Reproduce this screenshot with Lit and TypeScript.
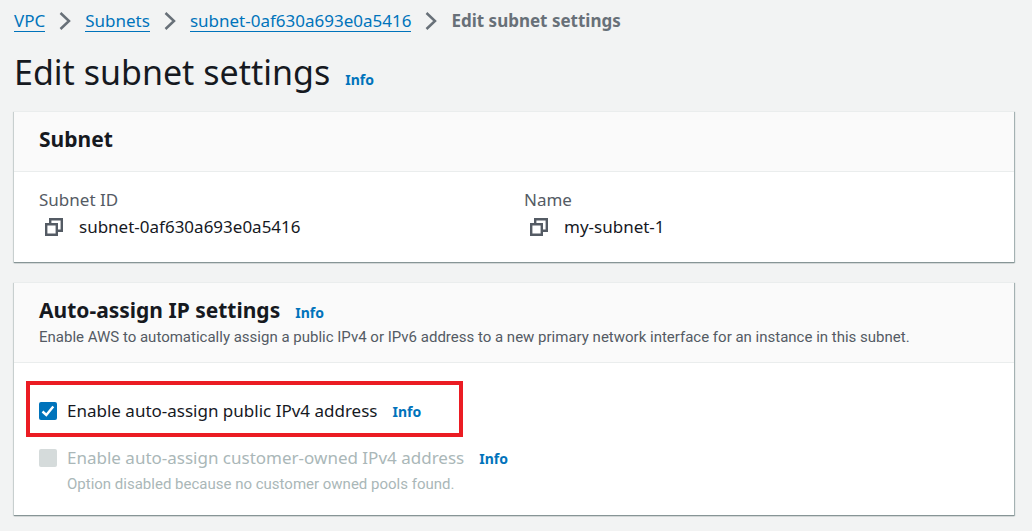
import { LitElement, html, css, svg } from "lit";
import { customElement } from "lit/decorators.js";

const chevron = html`<svg class="chevron" viewBox="0 0 12 20" aria-hidden="true">
  ${svg`<path d="M1.5 2 10 10 1.5 18" fill="none" stroke="currentColor" stroke-width="2.5" />`}
</svg>`;

const copyIcon = html`<svg class="copy-icon" viewBox="0 0 18 18" aria-hidden="true">
  ${svg`<path d="M1.2 6.2h10.6v10.6H1.2zM5.2 6V1.2h11.6v11.6H12" fill="none" stroke="currentColor" stroke-width="2.4" />`}
</svg>`;

@customElement("app-root")
export class AppRoot extends LitElement {
  static styles = css`
    :host {
      display: block;
      box-sizing: border-box;
      min-height: 100vh;
      padding: 8px 18px 0 14px;
      background: #f2f3f3;
      color: #16191f;
      font-family: "Noto Sans", "Open Sans", sans-serif;
      font-size: 17px;
      line-height: 26px;
    }
    .crumbs {
      display: flex;
      align-items: center;
      gap: 14px;
      margin: 0;
      padding: 0;
      list-style: none;
    }
    .crumbs li {
      display: flex;
      align-items: center;
      gap: 14px;
      height: 26px;
    }
    .crumbs a {
      color: #0073bb;
      line-height: 20px;
      text-decoration: none;
      border-bottom: 1px solid #0073bb;
    }
    .current {
      color: #687078;
      font-weight: 700;
    }
    .chevron {
      width: 12px;
      height: 20px;
      color: #687078;
    }
    .heading {
      display: flex;
      align-items: baseline;
      gap: 15px;
    }
    .page-heading {
      margin: 16px 0 17px;
    }
    h1,
    h2,
    p,
    dl,
    dd {
      margin: 0;
    }
    h1 {
      font-size: 34px;
      font-weight: 400;
      line-height: 44px;
    }
    h2 {
      font-size: 21px;
      font-weight: 700;
      line-height: 28px;
    }
    .info {
      color: #0073bb;
      font-size: 14px;
      font-weight: 700;
      line-height: 20px;
      text-decoration: none;
    }
    .panel {
      background: #fff;
      box-shadow: 0 1px 1px #879596, 1px 1px 1px #aab7b8, -1px 1px 1px #d5dbdb;
      border-top: 1px solid #eaeded;
      margin-bottom: 20px;
    }
    .panel:last-child {
      margin-bottom: 0;
    }
    .panel header {
      box-sizing: border-box;
      min-height: 60px;
      padding: 13px 25px 14px;
      background: #fafafa;
      border-bottom: 1px solid #eaeded;
    }
    .small {
      font-family: Roboto, "Noto Sans", sans-serif;
      font-size: 15px;
      line-height: 22px;
    }
    .small {
      margin-top: 2px;
    }
    .muted {
      color: #545b64;
    }
    .details {
      display: grid;
      grid-template-columns: 1fr 1fr;
      gap: 20px;
      padding: 15px 25px 21px;
    }
    .value {
      display: flex;
      align-items: center;
      gap: 16px;
      padding-left: 6px;
      line-height: 28px;
    }
    .copy {
      display: flex;
      padding: 0;
      border: 0;
      background: none;
      color: #545b64;
    }
    .copy-icon {
      width: 18px;
      height: 18px;
    }
    .options {
      display: flex;
      flex-direction: column;
      align-items: flex-start;
      gap: 21px;
      padding: 35px 25px 20px;
    }
    .option {
      display: grid;
      grid-template-columns: 18px auto;
      column-gap: 10px;
      align-items: center;
      position: relative;
    }
    .option .small {
      grid-column: 2;
    }
    .disabled {
      color: #aab7b8;
    }
    .marker {
      position: absolute;
      inset: -17px -42px -13px -13px;
      border: 4px solid #eb1c23;
      pointer-events: none;
    }
    input {
      appearance: none;
      width: 18px;
      height: 18px;
      margin: 0;
      border-radius: 2px;
      background: #d5dbdb;
    }
    .box {
      display: grid;
    }
    .box > * {
      grid-area: 1 / 1;
    }
    input:checked {
      background: #0073bb;
    }
    .tick {
      width: 18px;
      height: 18px;
      pointer-events: none;
      visibility: hidden;
    }
    input:checked + .tick {
      visibility: visible;
    }
  `;

  private info() {
    return html`<a class="info" href="#info">Info</a>`;
  }

  private detail(label: string, value: string) {
    return html`<dl>
      <dt class="muted">${label}</dt>
      <dd class="value">
        <button class="copy" type="button" aria-label="Copy ${label}">${copyIcon}</button>
        <span>${value}</span>
      </dd>
    </dl>`;
  }

  render() {
    return html`
      <nav aria-label="Breadcrumbs">
        <ol class="crumbs">
          <li><a href="#vpc">VPC</a>${chevron}</li>
          <li><a href="#subnets">Subnets</a>${chevron}</li>
          <li><a href="#subnet">subnet-0af630a693e0a5416</a>${chevron}</li>
          <li class="current" aria-current="page">Edit subnet settings</li>
        </ol>
      </nav>
      <main>
        <div class="heading page-heading">
          <h1>Edit subnet settings</h1>
          ${this.info()}
        </div>
        <section class="panel">
          <header><h2>Subnet</h2></header>
          <div class="details">
            ${this.detail("Subnet ID", "subnet-0af630a693e0a5416")}
            ${this.detail("Name", "my-subnet-1")}
          </div>
        </section>
        <section class="panel">
          <header>
            <div class="heading"><h2>Auto-assign IP settings</h2>${this.info()}</div>
            <p class="small muted">
              Enable AWS to automatically assign a public IPv4 or IPv6 address to a new primary network interface for an instance in this subnet.
            </p>
          </header>
          <div class="options">
            <div class="option">
              <span class="box">
                <input id="public-ip" type="checkbox" checked />
                <svg class="tick" viewBox="0 0 18 18" aria-hidden="true">
                  <path d="M3.5 9.5 7.3 13 14.3 4.5" fill="none" stroke="#fff" stroke-width="2.4" />
                </svg>
              </span>
              <div class="heading">
                <label for="public-ip">Enable auto-assign public IPv4 address</label>
                ${this.info()}
              </div>
              <div class="marker"></div>
            </div>
            <div class="option disabled">
              <span class="box"><input id="owned-ip" type="checkbox" disabled aria-describedby="owned-note" /></span>
              <div class="heading">
                <label for="owned-ip">Enable auto-assign customer-owned IPv4 address</label>
                ${this.info()}
              </div>
              <p class="small" id="owned-note">Option disabled because no customer owned pools found.</p>
            </div>
          </div>
        </section>
      </main>
    `;
  }
}
